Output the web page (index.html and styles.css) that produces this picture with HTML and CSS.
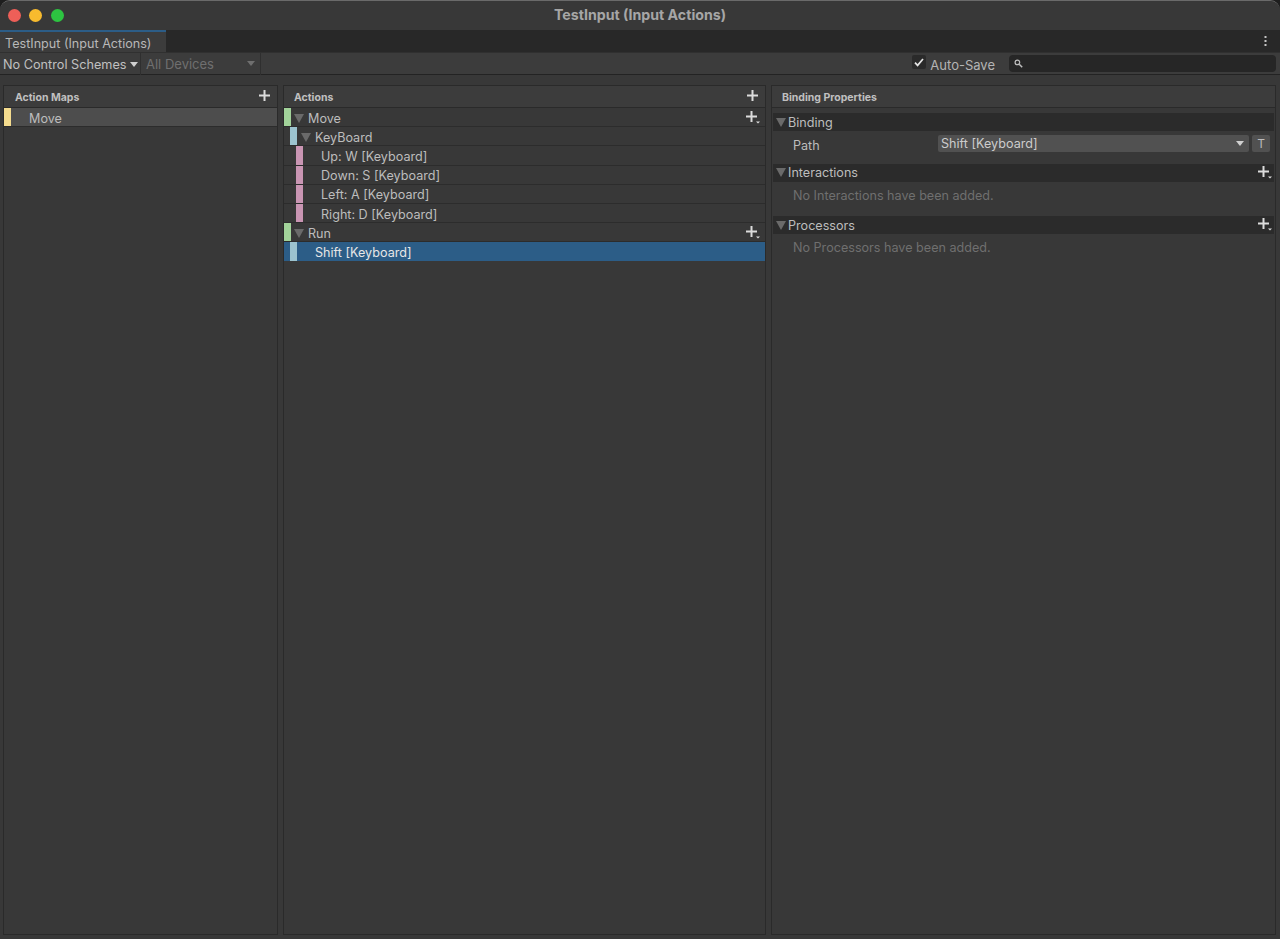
FILE: index.html
```html
<!DOCTYPE html>
<html lang="en">
<head>
  <meta charset="UTF-8" />
  <title>TestInput (Input Actions)</title>
  <link rel="stylesheet" href="styles.css">
</head>
<body>
  <div class="window">
    <div class="titlebar">
      <div class="lights">
        <span class="light red"></span>
        <span class="light yellow"></span>
        <span class="light green"></span>
      </div>
      <div class="title">TestInput (Input Actions)</div>
    </div>

    <div class="tabbar">
      <div class="tab">TestInput (Input Actions)</div>
      <svg class="kebab" width="3" height="10" viewBox="0 0 3 10"><path d="M0.5 0h2v2h-2zM0.5 4h2v2h-2zM0.5 8h2v2h-2z" fill="#c4c4c4"/></svg>
    </div>

    <div class="toolbar">
      <div class="tool schemes">No Control Schemes<span class="caret"></span></div>
      <div class="tool devices">All Devices<span class="caret dim"></span></div>
      <div class="spacer"></div>
      <div class="autosave">
        <span class="checkbox">
          <svg width="10" height="9" viewBox="0 0 10 9"><path d="M1 4.6l2.6 2.8L9 1" fill="none" stroke="#e4e4e4" stroke-width="1.7"/></svg>
        </span>
        <span>Auto-Save</span>
      </div>
      <div class="search">
        <svg width="9" height="9" viewBox="0 0 9 9"><circle cx="3.4" cy="3.4" r="2.3" fill="none" stroke="#bdbdbd" stroke-width="1.2"/><path d="M5.2 5.2L8.2 8.2" stroke="#bdbdbd" stroke-width="1.5"/></svg>
      </div>
    </div>

    <div class="panes">
      <section class="pane maps">
        <div class="pane-head">
          <span>Action Maps</span>
          <svg class="plus" width="11" height="11" viewBox="0 0 11 11"><path d="M4.5 0h2v4.5H11v2H6.5V11h-2V6.5H0v-2h4.5z" fill="#dcdcdc"/></svg>
        </div>
        <div class="row map-row"><span class="tag yellow-tag"></span><span class="label">Move</span></div>
      </section>

      <section class="pane actions">
        <div class="pane-head">
          <span>Actions</span>
          <svg class="plus" width="11" height="11" viewBox="0 0 11 11"><path d="M4.5 0h2v4.5H11v2H6.5V11h-2V6.5H0v-2h4.5z" fill="#dcdcdc"/></svg>
        </div>
        <div class="row"><span class="tag green-tag"></span><span class="arrow"></span><span class="label">Move</span>
          <svg class="plus-more" width="14" height="13" viewBox="0 0 14 13"><path d="M4.5 0h2v4.5H11v2H6.5V11h-2V6.5H0v-2h4.5z" fill="#dcdcdc"/><path d="M10 10.5h4L12 12.5z" fill="#dcdcdc"/></svg>
        </div>
        <div class="row lvl1"><span class="tag blue-tag"></span><span class="arrow"></span><span class="label">KeyBoard</span></div>
        <div class="row lvl2"><span class="tag pink-tag"></span><span class="label">Up: W [Keyboard]</span></div>
        <div class="row lvl2"><span class="tag pink-tag"></span><span class="label">Down: S [Keyboard]</span></div>
        <div class="row lvl2"><span class="tag pink-tag"></span><span class="label">Left: A [Keyboard]</span></div>
        <div class="row lvl2"><span class="tag pink-tag"></span><span class="label">Right: D [Keyboard]</span></div>
        <div class="row"><span class="tag green-tag"></span><span class="arrow"></span><span class="label">Run</span>
          <svg class="plus-more" width="14" height="13" viewBox="0 0 14 13"><path d="M4.5 0h2v4.5H11v2H6.5V11h-2V6.5H0v-2h4.5z" fill="#dcdcdc"/><path d="M10 10.5h4L12 12.5z" fill="#dcdcdc"/></svg>
        </div>
        <div class="row lvl1 selected"><span class="tag blue-tag"></span><span class="label">Shift [Keyboard]</span></div>
      </section>

      <section class="pane props">
        <div class="pane-head"><span>Binding Properties</span></div>
        <div class="fold first"><span class="arrow"></span><span>Binding</span></div>
        <div class="path-row">
          <span class="path-label">Path</span>
          <div class="path-field">Shift [Keyboard]<span class="caret"></span></div>
          <div class="t-btn">T</div>
        </div>
        <div class="fold second"><span class="arrow"></span><span>Interactions</span>
          <svg class="plus-more" width="14" height="13" viewBox="0 0 14 13"><path d="M4.5 0h2v4.5H11v2H6.5V11h-2V6.5H0v-2h4.5z" fill="#dcdcdc"/><path d="M10 10.5h4L12 12.5z" fill="#dcdcdc"/></svg>
        </div>
        <div class="empty">No Interactions have been added.</div>
        <div class="fold third"><span class="arrow"></span><span>Processors</span>
          <svg class="plus-more" width="14" height="13" viewBox="0 0 14 13"><path d="M4.5 0h2v4.5H11v2H6.5V11h-2V6.5H0v-2h4.5z" fill="#dcdcdc"/><path d="M10 10.5h4L12 12.5z" fill="#dcdcdc"/></svg>
        </div>
        <div class="empty">No Processors have been added.</div>
      </section>
    </div>
  </div>
</body>
</html>
```
FILE: styles.css
```css
* { box-sizing: border-box; }
html, body { margin: 0; padding: 0; height: 100%; background: #1e1e1e; overflow: hidden; }
body { font-family: Inter, "Noto Sans", sans-serif; font-size: 12.6px; color: #bdbdbd; }

.window { width: 1280px; height: 939px; display: flex; flex-direction: column; background: #383838; border-radius: 10px 10px 0 0; border-top: 1px solid #6a6a6a; overflow: hidden; }

.titlebar { height: 29px; flex: none; display: flex; align-items: center; justify-content: center; position: relative; padding-bottom: 2px; background: #383838; }
.lights { position: absolute; left: 7.5px; top: 8px; display: flex; gap: 8.5px; }
.light { width: 13px; height: 13px; border-radius: 50%; }
.red { background: #ee5f58; }
.yellow { background: #f8bb2e; }
.green { background: #2dc441; }
.title { font-weight: 700; font-size: 14.2px; color: #a6a6a6; }

.tabbar { height: 22px; flex: none; display: flex; justify-content: space-between; align-items: center; background: #282828; }
.tab { width: 166px; height: 22px; padding: 2px 0 0 5px; line-height: 19px; background: #3c3c3c; border-top: 2px solid #2c5d87; color: #b8b8b8; white-space: nowrap; }
.kebab { margin-right: 13px; }

.toolbar { height: 23px; flex: none; display: flex; align-items: center; background: #3c3c3c; border-bottom: 1px solid #232323; border-top: 1px solid #303030; }
.tool { height: 22px; display: flex; align-items: center; border-right: 1px solid #2f2f2f; white-space: nowrap; position: relative; }
.schemes { width: 141px; padding: 1px 0 0 3px; font-size: 12.7px; color: #c0c0c0; }
.schemes .caret { margin-left: 3px; }
.devices { width: 120px; padding-left: 5px; font-size: 13px; color: #6f6f6f; justify-content: space-between; padding-right: 5px; }
.caret { display: inline-block; width: 0; height: 0; border-left: 4.5px solid transparent; border-right: 4.5px solid transparent; border-top: 5px solid #d0d0d0; }
.caret.dim { border-top-color: #6f6f6f; }
.spacer { flex: 1; }
.autosave { display: flex; align-items: center; gap: 4px; font-size: 13px; color: #b4b4b4; margin-right: 14px; height: 22px; }
.autosave > span:last-child { padding-top: 3px; }
.checkbox { width: 14px; height: 14px; margin-bottom: 3px; background: #2a2a2a; border-radius: 2px; display: flex; align-items: center; justify-content: center; }
.search { width: 267px; height: 17px; margin-right: 4px; padding-left: 5px; background: #262626; border-radius: 4px; display: flex; align-items: center; }

.panes { flex: 1; display: flex; gap: 5px; padding: 10px 4px 4px 3px; min-height: 0; }
.pane { border: 1px solid #2a2a2a; background: #383838; }
.maps { width: 275px; }
.actions { width: 483px; }
.props { flex: 1; }
.pane-head { height: 22px; display: flex; align-items: center; justify-content: space-between; padding: 2px 7px 0 10px; background: #3c3c3c; border-bottom: 1px solid #2a2a2a; font-size: 10.5px; font-weight: 700; color: #c0c0c0; }
.maps .pane-head { padding-left: 11px; }
.pane-head .plus { margin-top: -5px; }

.row { height: 19.2px; display: flex; align-items: center; position: relative; padding: 2px 0 0 10px; border-bottom: 1px solid #2c2c2c; }
.row .label { margin-left: 4px; }
.tag { position: absolute; top: 0; bottom: 0; width: 6.5px; }
.row .tag { left: 0; }
.lvl1 .tag { left: 6px; }
.lvl2 .tag { left: 12px; }
.yellow-tag { background: #f5dc8e; }
.green-tag { background: #a2d39a; }
.blue-tag { background: #9cc3cf; }
.pink-tag { background: #c995b3; }
.lvl1 { padding-left: 17px; }
.lvl2 { padding-left: 33px; }
.selected { height: 19px; padding: 1px 0 0 27px; background: #2c5d87; color: #e6e6e6; border-bottom: none; }
.map-row { padding-left: 21px; background: #4d4d4d; }
.arrow { display: inline-block; width: 0; height: 0; border-left: 5px solid transparent; border-right: 5px solid transparent; border-top: 9px solid #6a6a6a; }
.plus-more { position: absolute; right: 5px; top: 3px; }

.fold { height: 18px; margin: 0 1px 0 1px; padding: 0 0 0 3px; display: flex; align-items: center; gap: 2px; background: #2b2b2b; position: relative; }
.fold.first { margin-top: 5px; }
.fold.second { margin-top: 11px; padding-bottom: 1px; }
.fold.third { margin-top: 11px; }
.fold .plus-more { right: 2px; top: 2px; }
.path-row { height: 22px; display: flex; align-items: center; padding: 3px 5px 0 21px; }
.path-label { width: 145px; padding-top: 4px; }
.path-field { flex: 1; height: 17px; padding: 0 5px 0 3px; display: flex; align-items: center; justify-content: space-between; background: #515151; border-radius: 2px; color: #cccccc; }
.t-btn { width: 18px; height: 17px; margin-left: 3px; background: #515151; border-radius: 2px; text-align: center; line-height: 17px; font-size: 12px; color: #bcbcbc; }
.empty { height: 23px; padding: 5px 0 0 21px; color: #6f6f6f; line-height: 17px; white-space: nowrap; }
```
